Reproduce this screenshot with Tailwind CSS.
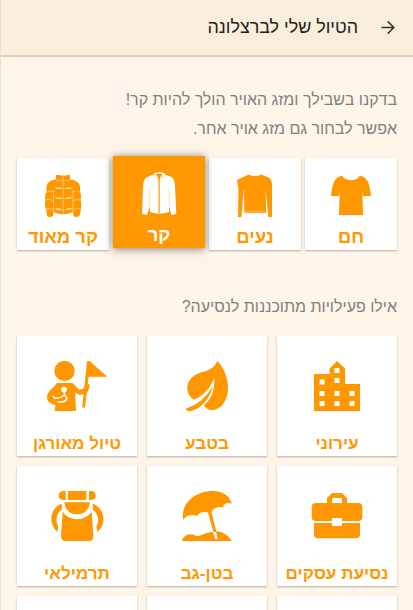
<!DOCTYPE html>
<html lang="he" dir="rtl">
<head>
    <meta charset="UTF-8">
    <meta name="viewport" content="width=device-width, initial-scale=1.0">
    <title>הטיול שלי לברצלונה</title>
    <script src="https://cdn.jsdelivr.net/npm/@tailwindcss/browser@4"></script>
</head>
<body class="h-screen flex flex-col overflow-hidden bg-[#fff4e8] border-l border-[#e0e0e0] font-['Liberation_Sans',Arial,sans-serif]">
    <!-- Header -->
    <header class="h-[57px] shrink-0 flex items-center gap-[21px] pr-4 bg-[#f9eddb] border-b-2 border-[#dfcfb9] text-[#212121]">
        <svg class="w-[18px] h-[18px]" viewBox="0 0 18 18" fill="none" stroke="#333" stroke-width="1.5">
            <path d="M2.500 8.500h12M8.700 2.400L14.800 8.500l-6.100 6.100"/>
        </svg>
        <h1 class="text-[17.9px]">הטיול שלי לברצלונה</h1>
    </header>

    <main class="flex-1 min-h-0 overflow-hidden px-4 pt-[28px] text-[#808080]">
        <!-- Weather -->
        <p class="text-[16px] leading-[29px]">בדקנו בשבילך ומזג האויר הולך להיות קר!<br>אפשר לבחור גם מזג אויר אחר.</p>

        <div class="mt-[15px] flex gap-1 text-[#ff9800] text-[18.4px] leading-[24px] font-bold">
            <button class="w-[92px] h-[92px] shrink-0 flex flex-col items-center pt-4 bg-white shadow-[0_1px_2px_rgba(0,0,0,0.3)]">
                <svg class="w-10 h-11" viewBox="0 0 40 44" fill="currentColor">
                    <path d="M0 22C1 12 3 4 9 2.300L11.500 2C14 7.500 26.500 7.500 28.500 2L31 2.300C37 4 39 12 40 22H32L31.300 16L32 41H8L8.700 16L8 22Z"/>
                </svg>
                <span class="mt-[7px]">חם</span>
            </button>
            <button class="w-[92px] h-[92px] shrink-0 flex flex-col items-center pt-4 bg-white shadow-[0_1px_2px_rgba(0,0,0,0.3)]">
                <svg class="w-10 h-11" viewBox="0 0 40 44" fill="currentColor">
                    <path d="M2 6L13.500 .5Q20 3.500 26.500 .5L33 3.300Q37 4.500 37 12V43H33.300L30.700 16L31 35.500L31.300 38.700H9.300L9 17H8.500L6.500 43H3L3.500 15Z"/>
                    <path d="M10 37.200h20.500" stroke="#fff" stroke-width=".25"/>
                </svg>
                <span class="mt-[7px]">נעים</span>
            </button>
            <button class="relative -top-0.5 w-[92px] h-[92px] shrink-0 flex flex-col items-center pt-4 bg-[#ff9800] text-white shadow-[0_1px_8px_rgba(0,0,0,0.5)]">
                <svg class="w-10 h-11" viewBox="0 0 40 44" fill="currentColor">
                    <path d="M16 .8Q20 -.3 24.500 .8L26 2.500L32.500 5Q35.500 7 36 14L37.300 42L32.300 43L30 34V40Q20 43.500 11 40V34L8 43L3 42L4 14Q4.500 7 8 5L14.500 2.500Z"/>
                    <path d="M17 1.800h6.500l-2.800 5.200V41h-1.200V7Z" fill="#ff9800"/>
                    <path d="M15.300 3l4.500 7M25.200 3l-4.800 7M10.800 17v17M30.200 17v17" stroke="#ff9800" stroke-width=".35"/>
                </svg>
                <span class="mt-[7px]">קר</span>
            </button>
            <button class="w-[92px] h-[92px] shrink-0 flex flex-col items-center pt-4 bg-white shadow-[0_1px_2px_rgba(0,0,0,0.3)]">
                <svg class="w-10 h-11" viewBox="0 0 40 44" fill="currentColor">
                    <path d="M13 1.300Q15 .2 17.500 1.500H23Q25.500 .2 27 1.300V5.500Q35 6 37 12V18Q39 22 37.500 26Q39 30 38 35L36.500 42Q33 44 30.500 42L30 38Q20 42.500 10.500 38L10 42Q7 44 4 42L3 35Q1 30 2.500 26Q1 22 3.500 18V12Q5 6 13 5.500Z"/>
                    <g fill="none" stroke="#fff" stroke-width=".4">
                        <path d="M20.200 2v38M13 6q7 2 14 0M11 13q9 3 19 0M11 23q9 3 19 0M11 34q9 4 19 0M4 18q3-2 6.500 0M30 18q3-2 7 0M3 26q4-2 7 1M30 27q4-3 7-1M3 35q4-2 7 1M30 36q4-3 8-1M10.500 16v22M30 16v22"/>
                        <path d="M13 14.300h5M23 14.300h5M13 24.300h5M23 24.300h5M13 35h5M23 35h5" stroke-width=".8"/>
                    </g>
                </svg>
                <span class="mt-[7px] whitespace-nowrap">קר מאוד</span>
            </button>
        </div>

        <!-- Activities -->
        <p class="mt-[42px] text-[16px] leading-[29px]">אילו פעילויות מתוכננות לנסיעה?</p>

        <div class="mt-[15px] grid grid-cols-[repeat(3,120px)] auto-rows-[120px] gap-[10px] text-[#ff9800] text-[17.1px] leading-[22px] font-bold">
            <button class="flex flex-col items-center pt-[25px] bg-white shadow-[0_1px_2px_rgba(0,0,0,0.3)]">
                <svg class="w-[60px] h-[50px] overflow-visible" viewBox="0 0 60 50" fill="currentColor">
                    <path d="M7 13H22.500V7.500L30 0L38 7.500V23H53V50H7Z"/>
                    <path fill="#fff" d="M12.500 18.500h5v5h-5zM12.500 30h5v5h-5zM12.500 40h5v5h-5zM27.500 7h5v5h-5zM27.500 17h5v5h-5zM27.500 30h5v5h-5zM27.500 40h5v5h-5zM42.500 30h5v5h-5zM42.500 40h5v5h-5z"/>
                </svg>
                <span class="mt-[22px]">עירוני</span>
            </button>
            <button class="flex flex-col items-center pt-[25px] bg-white shadow-[0_1px_2px_rgba(0,0,0,0.3)]">
                <svg class="w-[60px] h-[50px] overflow-visible" viewBox="0 0 60 50" fill="currentColor">
                    <path d="M40.300 0C47 7 51 17 51 27C51 39 44 49 35 49C31 49 28.500 47 27 44.500C34 38 38 30 37.300 17C34 25 28 34 17 38.700C12 36 10 31 10.300 26C11 18 18 13 25 11C32 9.500 37 7 40.300 0Z"/>
                    <path d="M9 47.500C20 44 29 37 36 24.500C33.500 37 24 48 14 50C11 50.500 9 50 9 47.500Z"/>
                </svg>
                <span class="mt-[22px]">בטבע</span>
            </button>
            <button class="flex flex-col items-center pt-[25px] bg-white shadow-[0_1px_2px_rgba(0,0,0,0.3)]">
                <svg class="w-[60px] h-[50px] overflow-visible" viewBox="0 0 60 50" fill="currentColor">
                    <circle cx="17.500" cy="9.900" r="10.200"/>
                    <path d="M40 0h2.500L60.300 15.700H41.700L38 46.500H35.200Z"/>
                    <path d="M10 22H25.700L32 28.500L36 28L39 24L42.500 23L42.300 27L40 32L33 34L28 31.500L29 50H7.500L8.500 44C3 43 0 40 0 36C0 30 6 28 10 22Z"/>
                    <circle cx="17" cy="28.500" r="2.800" fill="#fff"/>
                    <path d="M17 30L17.500 34L20 37Q19 42 10.500 40.800M17.500 34Q13 38 7.500 37L6 35" fill="none" stroke="#fff" stroke-width="1.500"/>
                </svg>
                <span class="mt-[22px]">טיול מאורגן</span>
            </button>
            <button class="flex flex-col items-center pt-[25px] bg-white shadow-[0_1px_2px_rgba(0,0,0,0.3)]">
                <svg class="w-[60px] h-[50px] overflow-visible" viewBox="0 0 60 50" fill="currentColor">
                    <path fill-rule="evenodd" d="M20 12V7L25 2H35L40 7V12ZM25 7V12H35V7Z"/>
                    <path d="M9 12H51Q55.300 12 55.300 16V26Q55.300 30 51 30H35V27H25V30H9Q4.700 30 4.700 26V16Q4.700 12 9 12Z"/>
                    <path d="M7 32H25V35H35V32H53V43Q53 47.300 49 47.300H11Q7 47.300 7 43Z"/>
                </svg>
                <span class="mt-[22px] whitespace-nowrap">נסיעת עסקים</span>
            </button>
            <button class="flex flex-col items-center pt-[25px] bg-white shadow-[0_1px_2px_rgba(0,0,0,0.3)]">
                <svg class="w-[60px] h-[50px] overflow-visible" viewBox="0 0 60 50" fill="currentColor">
                    <path d="M6.300 28.500C3 14 17 0 36 0C46 0 53 5 54.700 13C51 11 47 12 46 16.500C41 15 36 17 34.500 21.500L39.500 41H36.300L31 21.500C27 20 23 21 20 25C15 23 10 24 6.300 28.500Z"/>
                    <path d="M4.700 50C7 44 12 42 17 44Q21 46 26 43.500Q31 40.500 36 41L38 48H40.500L39 40.500C46 40.500 50 43 54.700 50Z"/>
                </svg>
                <span class="mt-[22px]">בטן-גב</span>
            </button>
            <button class="flex flex-col items-center pt-[25px] bg-white shadow-[0_1px_2px_rgba(0,0,0,0.3)]">
                <svg class="w-[60px] h-[50px] overflow-visible" viewBox="0 0 60 50" fill="currentColor">
                    <path d="M18.700 0V9H16Q11.700 8.500 11.700 4.500T16 0ZM21 0H39.300V9H21ZM42 0H44.500Q48.700 .5 48.700 4.500T44.500 9H42Z"/>
                    <path d="M17.300 11.300H43Q41 23.300 30 23.300T17.300 11.300Z"/>
                    <path d="M15.700 20.700Q21 28.300 30 28.300T44.700 20.700L46.300 45Q46.300 50 42 50H18.500Q14 50 14 45Z"/>
                    <path d="M14.800 12.700C2.500 17 1 33 10.300 41L11.300 35.500C8 30 9 23 14.800 18.500ZM45.700 12.700C58 17 60 33 50.300 41L49.300 35.500C52.500 30 51.500 23 45.700 18.500Z"/>
                </svg>
                <span class="mt-[22px]">תרמילאי</span>
            </button>
            <button class="bg-white shadow-[0_1px_2px_rgba(0,0,0,0.3)]"></button>
            <button class="bg-white shadow-[0_1px_2px_rgba(0,0,0,0.3)]"></button>
            <button class="bg-white shadow-[0_1px_2px_rgba(0,0,0,0.3)]"></button>
        </div>
    </main>
</body>
</html>
